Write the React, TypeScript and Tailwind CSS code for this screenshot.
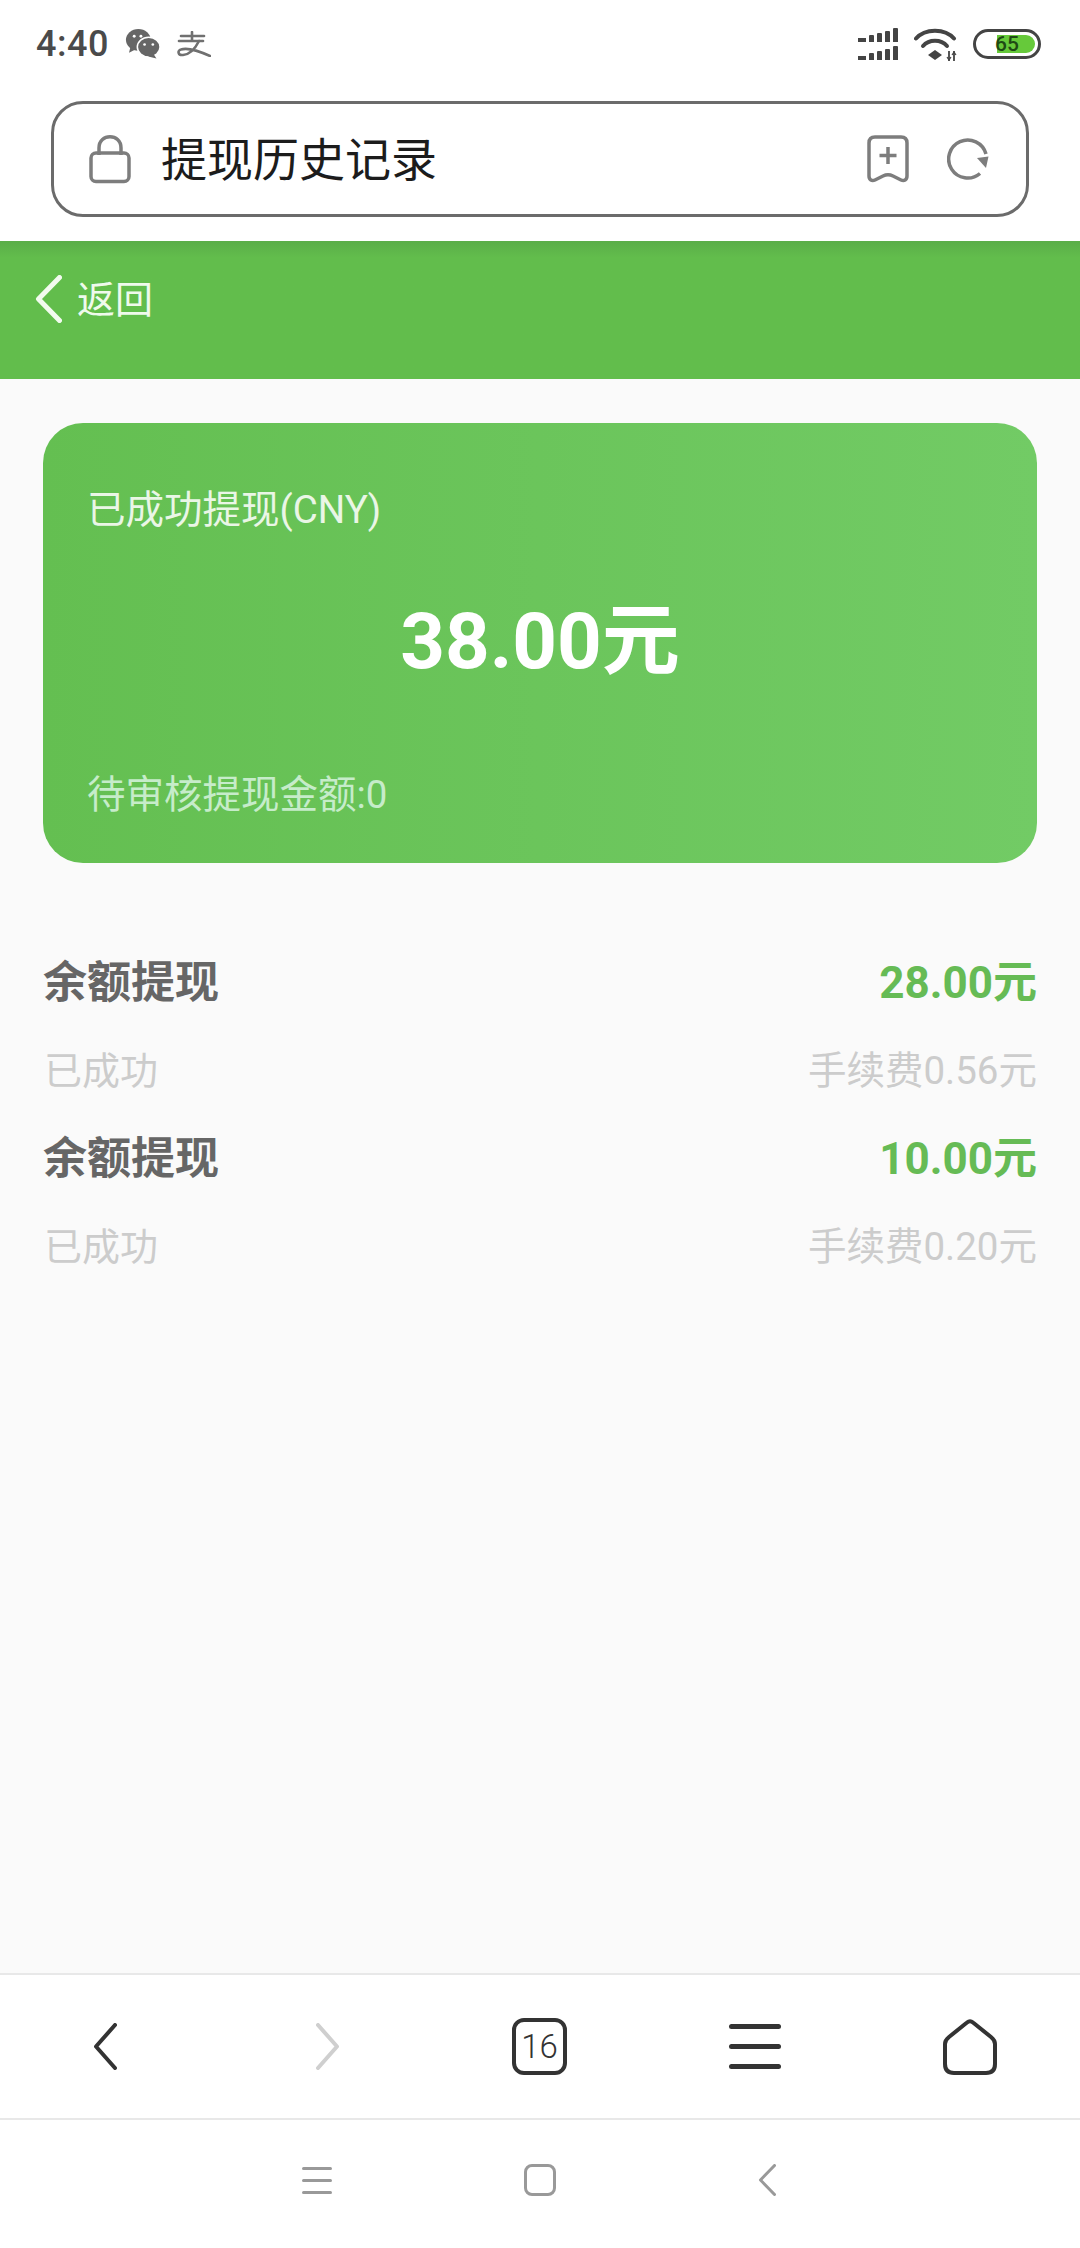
const font = 'font-["Roboto","Noto_Sans_CJK_SC",sans-serif]';

function WechatIcon() {
  return (
    <svg width="36" height="30" viewBox="0 0 34 29" className="ml-[16px]">
      <ellipse cx="12.5" cy="10.5" rx="12" ry="10.5" fill="#666" />
      <path d="M5 17 L3.5 23 L11 19 Z" fill="#666" />
      <ellipse cx="22.5" cy="17.5" rx="11" ry="9.5" fill="#666" stroke="#fff" strokeWidth="1.5" />
      <path d="M27 24 L30 28.5 L22 26.5 Z" fill="#666" />
      <circle cx="8.5" cy="7" r="1.4" fill="#fff" />
      <circle cx="15" cy="7" r="1.4" fill="#fff" />
      <circle cx="18.5" cy="15" r="1.3" fill="#fff" />
      <circle cx="26.5" cy="15" r="1.3" fill="#fff" />
    </svg>
  );
}

function AlipayIcon() {
  return (
    <svg width="34" height="26" viewBox="0 0 34 26" className="ml-[16px]" fill="none" stroke="#707070" strokeWidth="2.6" strokeLinecap="round">
      <path d="M15 1 V9" />
      <path d="M4 5 H27" />
      <path d="M2 10 H26" />
      <path d="M22 10 C18 18 12 23.5 6 24 C1 24.5 0 19.5 4 18.5 C10 16.5 22 20 33 25" />
    </svg>
  );
}

function SignalIcon() {
  const heights = [4, 7, 9, 11, 14];
  return (
    <div className="flex flex-col gap-[4px]">
      {[0, 1].map((row) => (
        <div key={row} className="flex items-end gap-[3px]">
          {heights.map((h, i) => (
            <span
              key={i}
              className={i === 0 ? 'w-[8px] bg-[#444]' : 'w-[5px] rounded-t-[1px] bg-[#444]'}
              style={{ height: h }}
            />
          ))}
        </div>
      ))}
    </div>
  );
}

function WifiIcon() {
  return (
    <svg width="43" height="33" viewBox="0 0 43 33" fill="none" className="ml-[16px]">
      <path d="M2 10.5 C11 0 31 0 40 10.5" stroke="#444" strokeWidth="4" strokeLinecap="round" />
      <path d="M9 18 C15 11 27 11 33 18" stroke="#444" strokeWidth="4" strokeLinecap="round" />
      <path d="M21 22 L28 27 L21 32 L14 27 Z" fill="#444" />
      <path d="M35 23 V33 M40 23 V33" stroke="#444" strokeWidth="1.8" />
      <path d="M33 29 L35 32 L37 29 M38 27 L40 24 L42 27" stroke="#444" strokeWidth="1.2" />
    </svg>
  );
}

function BatteryIcon() {
  return (
    <div className="relative ml-[16px] h-[30px] w-[68px] rounded-full border-[3px] border-[#444] bg-white">
      <div className="absolute top-[3px] bottom-[3px] left-[21px] right-[3px] rounded-r-full bg-[#66c93a]" />
      <span className={`absolute inset-0 flex items-center justify-center text-[21px] leading-none font-medium text-[#1e4a14] ${font}`}>65</span>
    </div>
  );
}

function ChevronLeft({ color, w, h, sw }: { color: string; w: number; h: number; sw: number }) {
  return (
    <svg width={w} height={h} viewBox={`0 0 ${w} ${h}`} fill="none">
      <path
        d={`M${w - sw / 2} ${sw / 2} L${sw / 2 + 1} ${h / 2} L${w - sw / 2} ${h - sw / 2}`}
        stroke={color}
        strokeWidth={sw}
        strokeLinecap="round"
        strokeLinejoin="round"
      />
    </svg>
  );
}

function ChevronRight({ color, w, h, sw }: { color: string; w: number; h: number; sw: number }) {
  return (
    <svg width={w} height={h} viewBox={`0 0 ${w} ${h}`} fill="none">
      <path
        d={`M${sw / 2} ${sw / 2} L${w - sw / 2 - 1} ${h / 2} L${sw / 2} ${h - sw / 2}`}
        stroke={color}
        strokeWidth={sw}
        strokeLinecap="round"
        strokeLinejoin="round"
      />
    </svg>
  );
}

function AddressBar() {
  return (
    <div className="mx-[51px] mt-[13px] flex h-[116px] items-center rounded-[32px] border-[3px] border-[#6b6b6b] bg-white">
      <svg width="42" height="50" viewBox="0 0 42 50" fill="none" className="ml-[35px]">
        <path d="M10 21 V14 C10 -1 32 -1 32 14 V21" stroke="#7d7d7d" strokeWidth="3.5" />
        <rect x="2" y="19" width="38" height="28.5" rx="5" stroke="#7d7d7d" strokeWidth="3.5" />
      </svg>
      <span className="ml-[30px] flex-1 pt-[2px] text-[46px] leading-none text-[#1c1c1c]">提现历史记录</span>
      <svg width="42" height="48" viewBox="0 0 42 48" fill="none">
        <path d="M2 8 C2 3.5 4 2 8 2 H34 C38 2 40 3.5 40 8 V41 C40 45 37 46.5 34 45 L26 41 C23 39.5 19 39.5 16 41 L8 45 C5 46.5 2 45 2 41 Z" stroke="#7d7d7d" strokeWidth="3.5" />
        <path d="M21 12 V29 M12.5 20.5 H29.5" stroke="#7d7d7d" strokeWidth="3.5" />
      </svg>
      <svg width="42" height="42" viewBox="0 0 42 42" fill="none" className="ml-[38px] mr-[37px]">
        <path d="M33 35.5 A19 19 0 1 1 39 16" stroke="#7d7d7d" strokeWidth="3.5" />
        <path d="M30 20 L41.5 18.5 L39 30 Z" fill="#7d7d7d" />
      </svg>
    </div>
  );
}

function RecordRow({ amount, fee }: { amount: string; fee: string }) {
  return (
    <div className="flex flex-col gap-[28px]">
      <div className="flex h-[60px] items-center justify-between">
        <span className="text-[44px] leading-none font-bold text-[#666666]">余额提现</span>
        <span className="text-[44px] leading-none font-bold text-[#66bb55]">{amount}</span>
      </div>
      <div className="flex h-[60px] items-center justify-between">
        <span className="pl-[1px] text-[38px] leading-none text-[#cccccc]">已成功</span>
        <span className="text-[38.5px] leading-none text-[#cccccc]">{fee}</span>
      </div>
    </div>
  );
}

export default function App() {
  return (
    <div className={`flex h-[2248px] w-[1080px] flex-col overflow-hidden bg-[#fafafa] ${font}`}>
      {/* browser chrome */}
      <div className="h-[241px] bg-white">
        <div className="flex h-[88px] items-center pr-[39px] pl-[36px]">
          <span className="text-[36px] leading-none font-medium tracking-[0.5px] text-[#4a4a4a]">4:40</span>
          <WechatIcon />
          <AlipayIcon />
          <div className="flex-1" />
          <SignalIcon />
          <WifiIcon />
          <BatteryIcon />
        </div>
        <AddressBar />
      </div>

      {/* green title bar */}
      <div className="flex h-[138px] items-start bg-linear-to-b from-[#5aad48] to-[#62bd4c] to-[12%] pt-[34px] pl-[35px]">
        <ChevronLeft color="#f2fbef" w={27} h={48} sw={5} />
        <span className="mt-[2px] ml-[15px] text-[38px] leading-[46px] text-[#effaec]">返回</span>
      </div>

      {/* summary card */}
      <div className="mx-[43px] mt-[44px] h-[440px] rounded-[40px] bg-linear-to-r from-[#64bf51] to-[#72cb65] px-[44px] pt-[62px]">
        <p className="text-[38.5px] leading-[50px] text-[#eaf6e6]">已成功提现(CNY)</p>
        <p className="mt-[57px] text-center text-[78px] leading-[100px] font-bold text-white">38.00元</p>
        <p className="mt-[78px] text-[38.5px] leading-[50px] text-[#c6ecca]">待审核提现金额:0</p>
      </div>

      {/* withdrawal records */}
      <div className="mx-[43px] flex flex-1 flex-col gap-[28px] pt-[90px]">
        <RecordRow amount="28.00元" fee="手续费0.56元" />
        <RecordRow amount="10.00元" fee="手续费0.20元" />
      </div>

      {/* browser toolbar */}
      <div className="flex h-[145px] items-center border-t-2 border-[#e8e8e8] bg-white">
        <div className="ml-[93px]">
          <ChevronLeft color="#333" w={24} h={47} sw={4} />
        </div>
        <div className="ml-[199px]">
          <ChevronRight color="#cfcfcf" w={24} h={47} sw={4} />
        </div>
        <div className="ml-[172px] flex h-[57px] w-[55px] items-center justify-center rounded-[12px] border-[4px] border-[#333] text-[33px] leading-none font-light text-[#333]">
          16
        </div>
        <div className="ml-[162px] flex w-[52px] flex-col gap-[15px]">
          <span className="h-[5px] rounded-full bg-[#333]" />
          <span className="h-[5px] rounded-full bg-[#333]" />
          <span className="h-[5px] rounded-full bg-[#333]" />
        </div>
        <svg width="54" height="56" viewBox="0 0 54 56" fill="none" className="ml-[162px]">
          <path d="M24 3.5 C26 1.8 28 1.8 30 3.5 L48 18 C50.5 20 52 22 52 25 V45 C52 51 49 54 43 54 H11 C5 54 2 51 2 45 V25 C2 22 3.5 20 6 18 Z" stroke="#333" strokeWidth="4" strokeLinejoin="round" />
        </svg>
      </div>

      {/* system navigation */}
      <div className="flex h-[130px] items-center border-t-2 border-[#e8e8e8] bg-white pb-[8px]">
        <div className="ml-[302px] flex w-[30px] flex-col gap-[9px]">
          <span className="h-[3px] rounded-full bg-[#999]" />
          <span className="h-[3px] rounded-full bg-[#999]" />
          <span className="h-[3px] rounded-full bg-[#999]" />
        </div>
        <div className="ml-[192px] h-[32px] w-[32px] rounded-[8px] border-[3px] border-[#999]" />
        <div className="ml-[202px]">
          <ChevronLeft color="#999" w={18} h={32} sw={3} />
        </div>
      </div>
    </div>
  );
}
